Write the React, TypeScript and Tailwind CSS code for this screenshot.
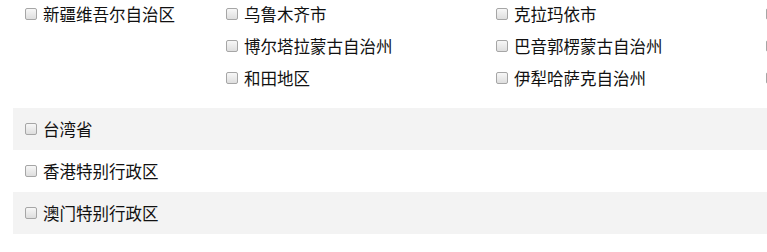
import React from 'react';

// Region picker: one province with its cities, then single provinces
interface Province {
  name: string;
  cities?: string[];
}

const xinjiang: Province = {
  name: '新疆维吾尔自治区',
  cities: [
    '乌鲁木齐市',
    '克拉玛依市',
    '吐鲁番市',
    '博尔塔拉蒙古自治州',
    '巴音郭楞蒙古自治州',
    '阿克苏地区',
    '和田地区',
    '伊犁哈萨克自治州',
    '塔城地区',
  ],
};

const others: Province[] = [{ name: '台湾省' }, { name: '香港特别行政区' }, { name: '澳门特别行政区' }];

const Box: React.FC = () => (
  <span className="inline-block h-[12px] w-[12px] shrink-0 rounded-[2px] border border-[#a6a6a6] bg-gradient-to-b from-[#f7f7f7] to-[#dedede]" />
);

const Item: React.FC<{ label: string }> = ({ label }) => (
  <label className="flex h-7 items-center gap-[6px] whitespace-nowrap">
    <Box />
    <span>{label}</span>
  </label>
);

export default function App() {
  return (
    <div
      className="h-[252px] w-[767px] overflow-hidden bg-white text-[16.5px] text-[#111]"
      style={{ fontFamily: '"Microsoft YaHei", "Noto Sans CJK SC", "Noto Sans", sans-serif' }}
    >
      <div className="pl-[13px]">
        {/* province with cities */}
        <div className="flex">
          <div className="w-[213px] shrink-0 pl-3">
            <Item label={xinjiang.name} />
          </div>
          <div className="grid shrink-0 grid-cols-[270px_270px_270px] gap-y-1">
            {xinjiang.cities?.map((c) => (
              <Item key={c} label={c} />
            ))}
          </div>
        </div>

        <div className="mt-4">
          {others.map((p, i) => (
            <div key={p.name} className={`flex h-[42px] items-center pl-3 ${i % 2 === 0 ? 'bg-[#f3f3f3]' : 'bg-white'}`}>
              <Item label={p.name} />
            </div>
          ))}
        </div>
      </div>
    </div>
  );
}
